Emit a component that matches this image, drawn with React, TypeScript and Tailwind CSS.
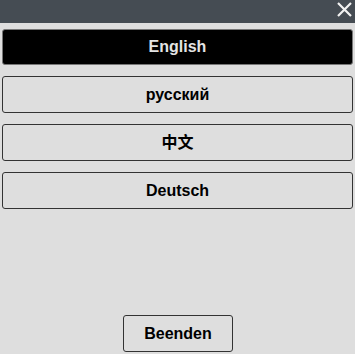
const languages = ['English', 'русский', '中文', 'Deutsch'];

export default function App() {
  const active = 'English';

  return (
    <div
      className="flex h-[354px] w-full flex-col bg-[#dedede]"
      style={{ fontFamily: '"Liberation Sans", Arial, "Noto Sans CJK SC", sans-serif' }}
    >
      {/* title bar */}
      <div className="flex h-[23px] items-start justify-end bg-[#454c53] pr-[3px] pt-[2px]">
        <svg width="15" height="15" viewBox="0 0 15 15" className="text-[#f2f2f2]">
          <path d="M1 1L14 14M14 1L1 14" stroke="currentColor" strokeWidth="2.2" />
        </svg>
      </div>

      {/* language list */}
      <div className="flex flex-col gap-[11px] px-[2px] pt-[6px]">
        {languages.map((lang) => (
          <button
            key={lang}
            className={
              lang === active
                ? 'h-[36px] w-full rounded-[3px] border border-[#777] bg-black text-[16px] font-bold text-[#e4e4e4]'
                : 'h-[37px] w-full rounded-[3px] border border-[#333] bg-[#dedede] text-[16px] font-bold text-black'
            }
          >
            {lang}
          </button>
        ))}
      </div>

      <div className="flex-1" />

      <div className="flex justify-center pb-[2px]">
        <button className="ml-[1px] h-[37px] w-[110px] rounded-[3px] border border-[#333] bg-[#dedede] text-[16px] font-bold text-black">
          Beenden
        </button>
      </div>
    </div>
  );
}
